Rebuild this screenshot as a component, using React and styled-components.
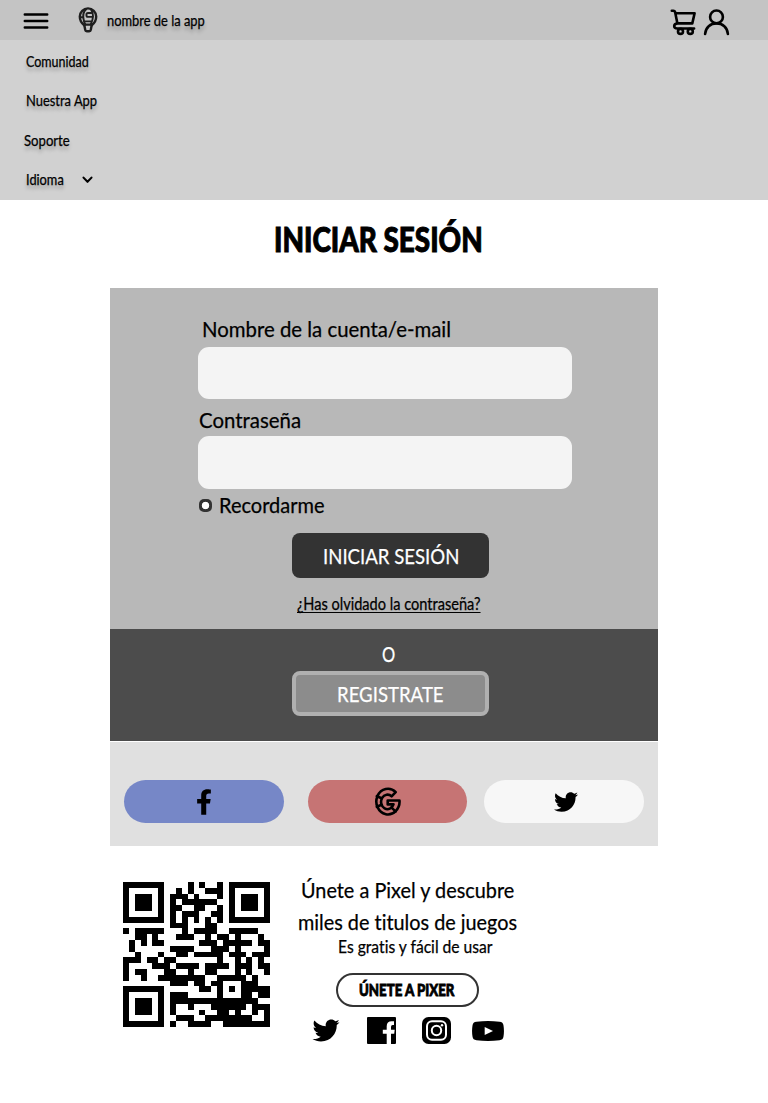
import React, { useLayoutEffect, useRef, useState } from 'react';
import styled, { createGlobalStyle } from 'styled-components';
import { FaTwitter, FaFacebookF } from 'react-icons/fa';

const GlobalStyle = createGlobalStyle`
  * { box-sizing: border-box; }
  body { margin: 0; background: #fff; color: #000; font-family: Lato, "Open Sans", sans-serif; font-variant-ligatures: none; }
  button { font: inherit; color: inherit; cursor: pointer; }
`;

/* ---------- text squeezed to a fixed measure ---------- */

const Measure = styled.span`
  display: block;
  flex: none;
  width: ${(p) => p.$w}px;
  margin-left: ${(p) => p.$ml || 0}px;
  height: ${(p) => p.$h}px;
  line-height: ${(p) => p.$h}px;
  font-size: ${(p) => p.$size}px;
  font-weight: ${(p) => p.$weight || 400};
  font-variant-ligatures: none;
  white-space: nowrap;
  text-align: left;
  text-shadow: ${(p) => (p.$shadow ? '0 4px 4px rgba(0, 0, 0, 0.25)' : 'none')};
  -webkit-text-stroke: ${(p) => p.$stroke ?? 0.25}px currentColor;
`;

const Squeezed = styled.span`
  display: inline-block;
  transform-origin: 0 50%;
  text-decoration: ${(p) => (p.$underline ? 'underline' : 'none')};
  text-decoration-thickness: 1px;
  text-underline-offset: 2px;
  text-decoration-skip-ink: none;
`;

function Text({ children, w, h, size, weight, ml, shadow, underline, stroke, as }) {
  const ref = useRef(null);
  const [scale, setScale] = useState(1);
  useLayoutEffect(() => {
    setScale(w / ref.current.offsetWidth);
  }, [w, children]);
  return (
    <Measure as={as} $w={w} $h={h} $size={size} $weight={weight} $ml={ml} $shadow={shadow} $stroke={stroke}>
      <Squeezed ref={ref} $underline={underline} style={{ transform: `scaleX(${scale})` }}>
        {children}
      </Squeezed>
    </Measure>
  );
}

/* ---------- QR code, version 2, level M, mask 2 ---------- */

const EXP = [];
const LOG = [];
for (let i = 0, x = 1; i < 255; i++) {
  EXP[i] = x;
  LOG[x] = i;
  x = (x << 1) ^ (x & 128 ? 0x11d : 0);
}
const mul = (a, b) => (a && b ? EXP[(LOG[a] + LOG[b]) % 255] : 0);

function qrMatrix(text) {
  const N = 25;
  const DATA = 28;
  const ECC = 16;
  const bits = [];
  const push = (v, n) => {
    for (let i = n - 1; i >= 0; i--) bits.push((v >> i) & 1);
  };
  push(4, 4);
  push(text.length, 8);
  for (const c of text) push(c.charCodeAt(0), 8);
  push(0, Math.min(4, DATA * 8 - bits.length));
  while (bits.length % 8) bits.push(0);
  for (let pad = 0xec; bits.length < DATA * 8; pad ^= 0xec ^ 0x11) push(pad, 8);

  const data = [];
  for (let i = 0; i < bits.length; i += 8) data.push(parseInt(bits.slice(i, i + 8).join(''), 2));
  let gen = [1];
  for (let i = 0; i < ECC; i++) {
    const next = new Array(gen.length + 1).fill(0);
    gen.forEach((g, j) => {
      next[j] ^= g;
      next[j + 1] ^= mul(g, EXP[i]);
    });
    gen = next;
  }
  const rem = [...data, ...new Array(ECC).fill(0)];
  for (let i = 0; i < DATA; i++) {
    const f = rem[i];
    gen.forEach((g, j) => {
      rem[i + j] ^= mul(g, f);
    });
  }
  rem.slice(DATA).forEach((b) => push(b, 8));

  const m = Array.from({ length: N }, () => new Array(N).fill(null));
  const finder = (r0, c0) => {
    for (let r = -1; r < 8; r++) {
      for (let c = -1; c < 8; c++) {
        if (m[r0 + r] === undefined || m[r0 + r][c0 + c] === undefined) continue;
        const d = Math.max(Math.abs(r - 3), Math.abs(c - 3));
        m[r0 + r][c0 + c] = d === 3 || d <= 1 ? 1 : 0;
      }
    }
  };
  finder(0, 0);
  finder(0, N - 7);
  finder(N - 7, 0);
  for (let r = -2; r <= 2; r++) {
    for (let c = -2; c <= 2; c++) m[18 + r][18 + c] = Math.max(Math.abs(r), Math.abs(c)) === 1 ? 0 : 1;
  }
  for (let i = 8; i < N - 8; i++) m[6][i] = m[i][6] = i % 2 ? 0 : 1;

  const format = '101111001111100'.split('').map(Number);
  const first = [[8, 0], [8, 1], [8, 2], [8, 3], [8, 4], [8, 5], [8, 7], [8, 8], [7, 8], [5, 8], [4, 8], [3, 8], [2, 8], [1, 8], [0, 8]];
  first.forEach(([r, c], i) => {
    m[r][c] = format[i];
  });
  for (let i = 0; i < 7; i++) m[N - 1 - i][8] = format[i];
  for (let i = 7; i < 15; i++) m[8][N - 15 + i] = format[i];
  m[N - 8][8] = 1;

  let k = 0;
  let up = true;
  for (let col = N - 1; col > 0; col -= 2) {
    if (col === 6) col = 5;
    for (let i = 0; i < N; i++) {
      const r = up ? N - 1 - i : i;
      for (const c of [col, col - 1]) {
        if (m[r][c] === null) m[r][c] = (bits[k++] || 0) ^ (c % 3 === 0 ? 1 : 0);
      }
    }
    up = !up;
  }
  return m;
}

const QrSvg = styled.svg`
  display: block;
  flex: none;
  width: 147px;
  height: 145px;
  margin: 5px 0 0 13px;
`;

function QrCode({ value }) {
  const d = qrMatrix(value)
    .map((row, y) => row.map((on, x) => (on ? `M${x} ${y}h1v1h-1z` : '')).join(''))
    .join('');
  return (
    <QrSvg viewBox="0 0 25 25" preserveAspectRatio="none" shapeRendering="crispEdges">
      <path d={d} />
    </QrSvg>
  );
}

/* ---------- icons ---------- */

const Icon = styled.svg`
  display: block;
  flex: none;
  width: ${(p) => p.$w}px;
  height: ${(p) => p.$h}px;
  margin-left: ${(p) => p.$ml || 0}px;
  margin-top: ${(p) => p.$mt || 0}px;
  fill: none;
  stroke: ${(p) => p.$color || '#000'};
  stroke-width: ${(p) => p.$sw || 2.6};
  stroke-linecap: round;
  stroke-linejoin: round;
`;

const MenuIcon = () => (
  <Icon $w={26} $h={18} $ml={23} $mt={2} $sw={2.5} viewBox="0 0 26 18">
    <path d="M1.8 2.5h22.4M1.8 9h22.4M1.8 15.5h22.4" />
  </Icon>
);

const BalloonIcon = () => (
  <Icon $w={20} $h={26} $ml={29} $sw={2.4} $color="#1e1e1e" viewBox="0 0 20 26">
    <path d="M6.2 18.2C3.2 16 1.8 13 1.8 9.6a8.2 8.2 0 0 1 16.4 0c0 3.4-1.4 6.4-4.4 8.6" />
    <path d="M8.2 2.2C5.400 4.600 4.600 8.600 5.800 13.200q.4 2 1.400 4M13 2.600c1.600 2 2.200 4.200 2 6.600-.1 2.500-.8 5.300-2.200 8" strokeWidth="1.900" />
    <path d="M2.200 10.200h3M13.400 6H10q-1.600 0-1.600 1.900t1.600 2h4.400M6.200 14.400h7" strokeWidth="1.900" />
    <path d="M6.200 17.600h7.600l-1 5.200q-.2 1.400-1.600 1.400H8.800q-1.400 0-1.600-1.400z" />
  </Icon>
);

const CartIcon = () => (
  <Icon $w={27} $h={27} viewBox="0 0 27 27">
    <path d="M1.800 1.800h1.500q1.600 0 1.900 1.600l2.200 11M5.400 4.200h19.200l-2.300 10.200H7.600q-3.400.4-3.400 2.600 0 2.500 3.200 2.500h16.700" />
    <circle cx="10.500" cy="22.400" r="2.500" />
    <circle cx="20.300" cy="22.400" r="2.500" />
  </Icon>
);

const UserIcon = () => (
  <Icon $w={27} $h={27} $ml={5.5} $sw={2.6} viewBox="0 0 27 27">
    <circle cx="13.500" cy="7.900" r="6.400" />
    <path d="M2.100 25q.3-4.800 3.600-7.800 3.200-2.800 7.800-2.800t7.800 2.800q3.300 3 3.600 7.800" />
  </Icon>
);

const ChevronIcon = () => (
  <Icon $w={11} $h={8} $ml={19} $sw={2.1} viewBox="0 0 11 8">
    <path d="M1.500 1.600l4 4.200 4-4.200" />
  </Icon>
);

const GoogleIcon = () => (
  <Icon $w={27} $h={29} $sw={2.6} viewBox="0 0 27 29">
    <path d="M21.700 5.100A11.600 12.800 0 1 0 25.500 13.500H13.700v3.900h5.800A6.400 7.300 0 1 1 17.600 9.300z" />
    <path d="M2.800 9.200l4.800 2M2.800 19.800l4.800-2M17.400 20.600l4.300 3.800" />
  </Icon>
);

const FacebookSquareIcon = () => (
  <Icon $w={29} $h={27} $ml={27} viewBox="0 0 29 27">
    <path
      fill="#000"
      stroke="none"
      d="M1 0h27q1 0 1 1v25q0 1-1 1h-4V16.800h3.200l.5-4H24V9.900q0-1.900 1.600-1.900H27V4.300h-2.300q-5 0-5 5v3.500h-3.900v4h3.900V27H1q-1 0-1-1V1q0-1 1-1z"
    />
  </Icon>
);

const InstagramIcon = () => (
  <Icon $w={29} $h={27} $ml={26} viewBox="0 0 29 27">
    <rect width="29" height="27" rx="6.500" fill="#000" stroke="none" />
    <rect x="5" y="4.300" width="19" height="18.400" rx="5" stroke="#fff" strokeWidth="2" />
    <circle cx="14.500" cy="13.500" r="4.700" stroke="#fff" strokeWidth="2" />
    <circle cx="20" cy="8.300" r="1.200" fill="#fff" stroke="none" />
  </Icon>
);

const YoutubeIcon = () => (
  <Icon $w={32} $h={20} $ml={21} viewBox="0 0 32 20">
    <path
      fill="#000"
      stroke="none"
      d="M4.500.7Q16-.6 27.500.7q3.600.3 4 3.700.9 5.600 0 11.200-.4 3.400-4 3.700Q16 20.600 4.500 19.300q-3.600-.3-4-3.700-.9-5.600 0-11.200Q.9 1 4.500.7z"
    />
    <path fill="#fff" stroke="none" d="M12.700 5.900v8.200l8.300-4.100z" />
  </Icon>
);

const Bird = styled(FaTwitter)`
  display: block;
  flex: none;
  width: ${(p) => p.$w}px;
  height: ${(p) => p.$h}px;
  margin-left: ${(p) => p.$ml || 0}px;
`;

const FacebookF = styled(FaFacebookF)`
  display: block;
  width: 16px;
  height: 26px;
  margin-top: 1px;
`;

/* ---------- layout ---------- */

const Page = styled.div`
  width: 768px;
  height: 1103px;
  overflow: hidden;
  background: #fff;
`;

const TopBar = styled.header`
  display: flex;
  align-items: center;
  height: 40px;
  background: #c4c4c4;
`;

const TopActions = styled.div`
  display: flex;
  align-items: center;
  margin: 5px 38.500px 0 auto;
`;

const Nav = styled.nav`
  height: 160px;
  padding: 1.500px 0 0 24px;
  background: #d1d1d1;
`;

const NavItem = styled.div`
  display: flex;
  align-items: center;
  height: 39.500px;
`;

const TitleRow = styled.div`
  height: 88px;
  padding-left: 274px;
`;

const Card = styled.main`
  width: 548px;
  margin: 0 auto;
`;

const Form = styled.form`
  height: 341px;
  padding: 22px 86px 0 88px;
  background: #b8b8b8;
`;

const Field = styled.input`
  display: block;
  width: 374px;
  height: ${(p) => p.$h}px;
  margin-bottom: ${(p) => p.$gap || 0}px;
  border: 0;
  border-radius: 11px;
  background: #f4f4f4;
`;

const Remember = styled.label`
  display: flex;
  align-items: center;
  height: 32px;
  margin-bottom: 12px;
`;

const Radio = styled.span`
  width: 13px;
  height: 13px;
  margin: 1px 0 0 1px;
  border-radius: 5px;
  background: radial-gradient(circle, #fff 3.400px, #333 4.100px);
`;

const ActionButton = styled.button`
  display: flex;
  align-items: center;
  justify-content: center;
  width: 197px;
  height: 45px;
  margin-left: ${(p) => p.$ml}px;
  padding: 0;
  border: ${(p) => (p.$muted ? '4px solid #b0b0b0' : '0')};
  border-radius: 8px;
  background: ${(p) => (p.$muted ? '#8c8c8c' : '#333')};
  color: #fff;
`;

const Register = styled.section`
  height: 112px;
  padding: 8px 0 0;
  background: #4c4c4c;
  color: #fff;
`;

const Social = styled.section`
  display: flex;
  height: 104px;
  margin-top: 1px;
  padding: 38px 14px 0;
  background: #e0e0e0;
`;

const SocialButton = styled.button`
  display: flex;
  align-items: center;
  justify-content: center;
  width: ${(p) => p.$w}px;
  height: 43px;
  margin-right: ${(p) => p.$gap || 0}px;
  padding: 0 ${(p) => p.$shift || 0}px 0 0;
  border: 0;
  border-radius: 21.500px;
  background: ${(p) => p.$bg};
  color: #000;
`;

const Footer = styled.footer`
  display: flex;
  width: 548px;
  margin: 31px auto 0;
`;

const Invite = styled.div`
  margin-left: 26px;
`;

const JoinButton = styled.button`
  display: flex;
  align-items: center;
  width: 143px;
  height: 34px;
  margin: 21px 0 10px 40px;
  padding: 0 0 0 21px;
  border: 2px solid #333;
  border-radius: 17px;
  background: #fff;
`;

const Links = styled.div`
  display: flex;
  align-items: center;
  margin-left: 16px;
`;

export default function App() {
  return (
    <Page>
      <GlobalStyle />
      <TopBar>
        <MenuIcon />
        <BalloonIcon />
        <Text w={98} h={44} size={15} ml={9} shadow>nombre de la app</Text>
        <TopActions>
          <CartIcon />
          <UserIcon />
        </TopActions>
      </TopBar>
      <Nav>
        <NavItem><Text w={62.5} h={39} size={15} ml={1.5} shadow>Comunidad</Text></NavItem>
        <NavItem><Text w={71.5} h={39} size={15} ml={1.5} shadow>Nuestra App</Text></NavItem>
        <NavItem><Text w={45.5} h={39} size={15} shadow>Soporte</Text></NavItem>
        <NavItem>
          <Text w={37.5} h={39} size={15} ml={1.5} shadow>Idioma</Text>
          <ChevronIcon />
        </NavItem>
      </Nav>
      <TitleRow>
        <Text w={208.5} h={76} size={35} weight={900} stroke={1}>INICIAR SESIÓN</Text>
      </TitleRow>
      <Card>
        <Form onSubmit={(e) => e.preventDefault()}>
          <Text w={249} h={37} size={22} ml={3.5}>Nombre de la cuenta/e-mail</Text>
          <Field $h={52} $gap={4} aria-label="Nombre de la cuenta/e-mail" />
          <Text w={102} h={33} size={22} ml={0.5}>Contraseña</Text>
          <Field $h={53} type="password" aria-label="Contraseña" />
          <Remember>
            <Radio />
            <Text w={105.5} h={32} size={22} ml={6.5}>Recordarme</Text>
          </Remember>
          <ActionButton $ml={94} type="submit">
            <Text w={136} h={45} size={22}>INICIAR SESIÓN</Text>
          </ActionButton>
          <Text w={183.5} h={51} size={17} ml={98.5} underline>¿Has olvidado la contraseña?</Text>
        </Form>
        <Register>
          <Text w={13.5} h={34} size={22} ml={271.5}>O</Text>
          <ActionButton $ml={182} $muted type="button">
            <Text w={106.5} h={36} size={22}>REGISTRATE</Text>
          </ActionButton>
        </Register>
        <Social>
          <SocialButton $w={160} $gap={24} $bg="#7687c7" $shift={1} aria-label="Facebook"><FacebookF /></SocialButton>
          <SocialButton $w={159} $gap={17} $bg="#c67474" aria-label="Google"><GoogleIcon /></SocialButton>
          <SocialButton $w={160} $bg="#f7f7f7" aria-label="Twitter"><Bird $w={24} $h={26} $ml={4} /></SocialButton>
        </Social>
      </Card>
      <Footer>
        <QrCode value="http://www.unitaglive.com" />
        <Invite>
          <Text w={213} h={25} size={22} ml={4.5}>Únete a Pixel y descubre</Text>
          <Text w={219} h={39} size={22} ml={1.5}>miles de titulos de juegos</Text>
          <Text w={154.5} h={11} size={17} ml={41.5}>Es gratis y fácil de usar</Text>
          <JoinButton type="button">
            <Text w={95} h={30} size={16} weight={900} stroke={0.8}>ÚNETE A PIXER</Text>
          </JoinButton>
          <Links>
            <Bird $w={28} $h={27} />
            <FacebookSquareIcon />
            <InstagramIcon />
            <YoutubeIcon />
          </Links>
        </Invite>
      </Footer>
    </Page>
  );
}
